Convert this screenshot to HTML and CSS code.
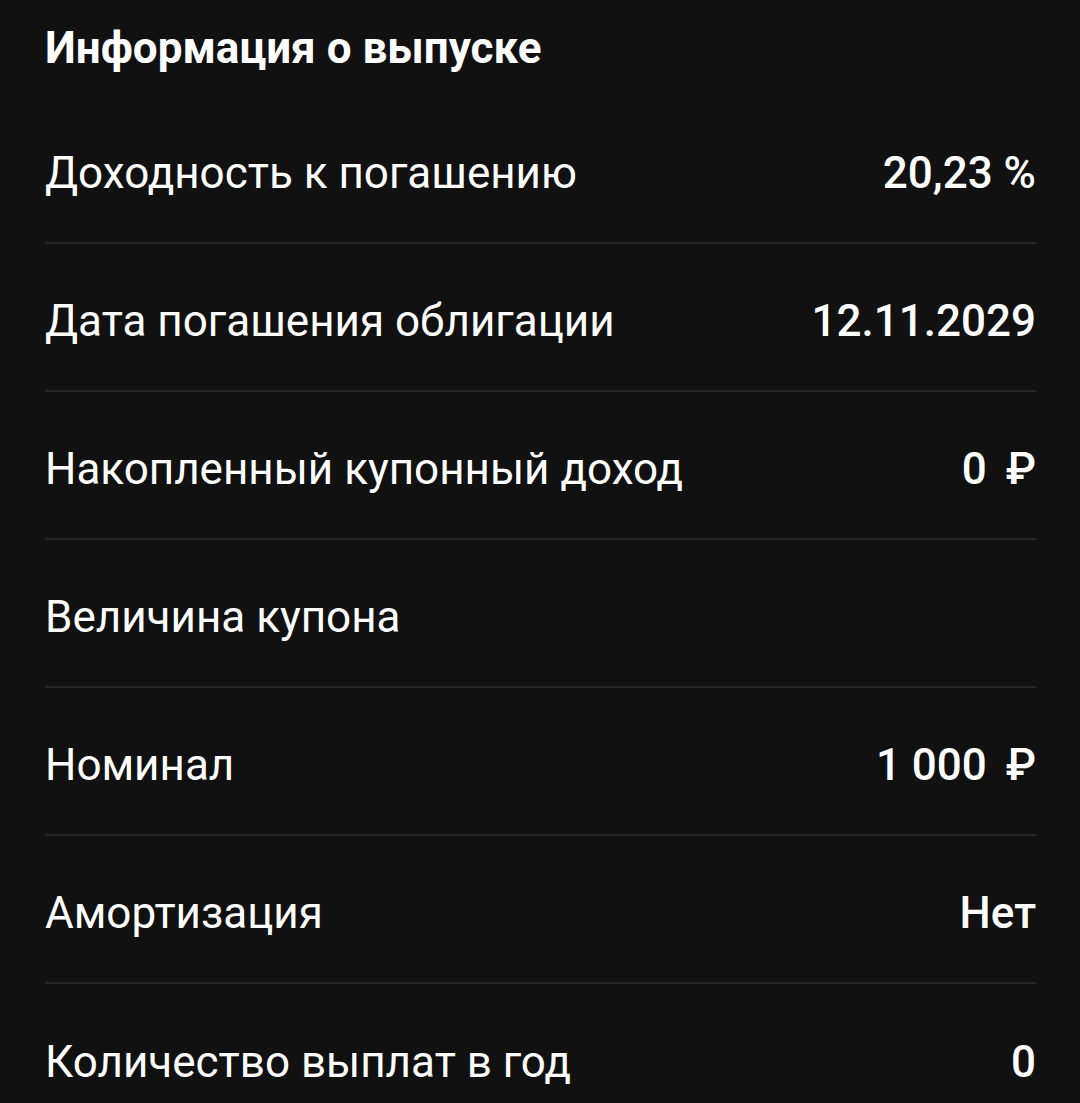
FILE: index.html
```html
<!DOCTYPE html>
<html lang="ru">
<head>
<meta charset="utf-8">
<link rel="stylesheet" href="styles.css">
</head>
<body>
<div class="panel">
  <h1 class="title">Информация о выпуске</h1>
  <div class="list">
    <div class="row"><span class="label">Доходность к погашению</span><span class="value">20,23 %</span></div>
    <div class="row"><span class="label">Дата погашения облигации</span><span class="value">12.11.2029</span></div>
    <div class="row"><span class="label">Накопленный купонный доход</span><span class="value">0 <span class="cur">₽</span></span></div>
    <div class="row"><span class="label">Величина купона</span><span class="value"></span></div>
    <div class="row"><span class="label">Номинал</span><span class="value">1 000 <span class="cur">₽</span></span></div>
    <div class="row"><span class="label">Амортизация</span><span class="value">Нет</span></div>
    <div class="row"><span class="label">Количество выплат в год</span><span class="value">0</span></div>
  </div>
</div>
</body>
</html>
```
FILE: styles.css
```css
html, body {
  margin: 0;
  padding: 0;
  background: #111111;
}
body {
  font-family: Roboto, "Noto Sans", sans-serif;
  color: #ffffff;
  overflow: hidden;
}
.panel {
  padding: 0 44px 0 45px;
}
.title {
  margin: 0;
  height: 96px;
  line-height: 96px;
  font-size: 44px;
  font-weight: 700;
}
.row {
  display: flex;
  justify-content: space-between;
  align-items: center;
  height: 148px;
  padding-top: 8px;
  box-sizing: border-box;
  border-bottom: 2px solid #262626;
}
.row:last-child {
  border-bottom: none;
}
.label {
  font-size: 44px;
  font-weight: 400;
}
.value {
  font-size: 44px;
  font-weight: 500;
}
.cur {
  margin-left: 8px;
}
```
